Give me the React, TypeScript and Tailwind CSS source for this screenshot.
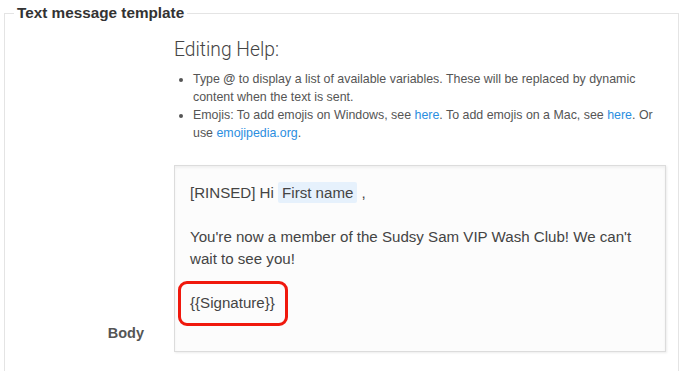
import React from "react";

export default function App() {
  return (
    <div
      className="w-[688px] h-[371px] overflow-hidden bg-white pt-[4px] pl-[4px]"
      style={{ fontFamily: "'Liberation Sans', Arial, sans-serif" }}
    >
      <fieldset className="w-[675px] h-[400px] border border-[#e4e4e4] m-0 p-0 min-w-0">
        <legend className="ml-[9px] px-[3px] text-[15.3px] leading-[18px] font-bold text-[#333]">
          Text message template
        </legend>
        <div className="flex">
          <div className="w-[169px] shrink-0 flex flex-col justify-end items-end pr-[30px] pb-[9px]">
            <span className="text-[14.5px] font-bold text-[#555] leading-[20px]">Body</span>
          </div>
          <div className="w-[492px] pt-[15px]">
            <h3
              className="text-[19.3px] leading-[26px] font-light text-[#444]"
              style={{ fontFamily: "Roboto, 'Liberation Sans', sans-serif" }}
            >
              Editing Help:
            </h3>
            <ul className="mt-[7px] pl-[19px] list-disc text-[12.4px] leading-[18px] text-[#555]">
              <li>
                Type <b className="font-bold">@</b> to display a list of available variables. These will be replaced by dynamic content when the text is sent.
              </li>
              <li>
                Emojis: To add emojis on Windows, see <a className="text-[#2b8ee0]">here</a>. To add emojis on a Mac, see{" "}
                <a className="text-[#2b8ee0]">here</a>. Or use <a className="text-[#2b8ee0]">emojipedia.org</a>.
              </li>
            </ul>
            <div className="mt-[23px] h-[187px] border border-[#dcdcdc] bg-[#fcfcfc] shadow-[inset_0_2px_3px_rgba(0,0,0,0.05),1px_1px_2px_rgba(0,0,0,0.08)] pl-[15px] pr-[20px] pt-[16px] text-[15.1px] leading-[22px] text-[#444]">
              <p>
                [RINSED] Hi{" "}
                <span className="bg-[#e6f1fc] px-[4px] py-[2px] rounded-[2px]">First name</span> ,
              </p>
              <p>&nbsp;</p>
              <p>You're now a member of the Sudsy Sam VIP Wash Club! We can't wait to see you!</p>
              <p>&nbsp;</p>
              <div className="-ml-[12px] -my-[11px] w-[110px] h-[45px] border-[3px] border-[#f0180d] rounded-[9px] pl-[9px] pt-[8px]">
                {"{{Signature}}"}
              </div>
            </div>
          </div>
        </div>
      </fieldset>
    </div>
  );
}
